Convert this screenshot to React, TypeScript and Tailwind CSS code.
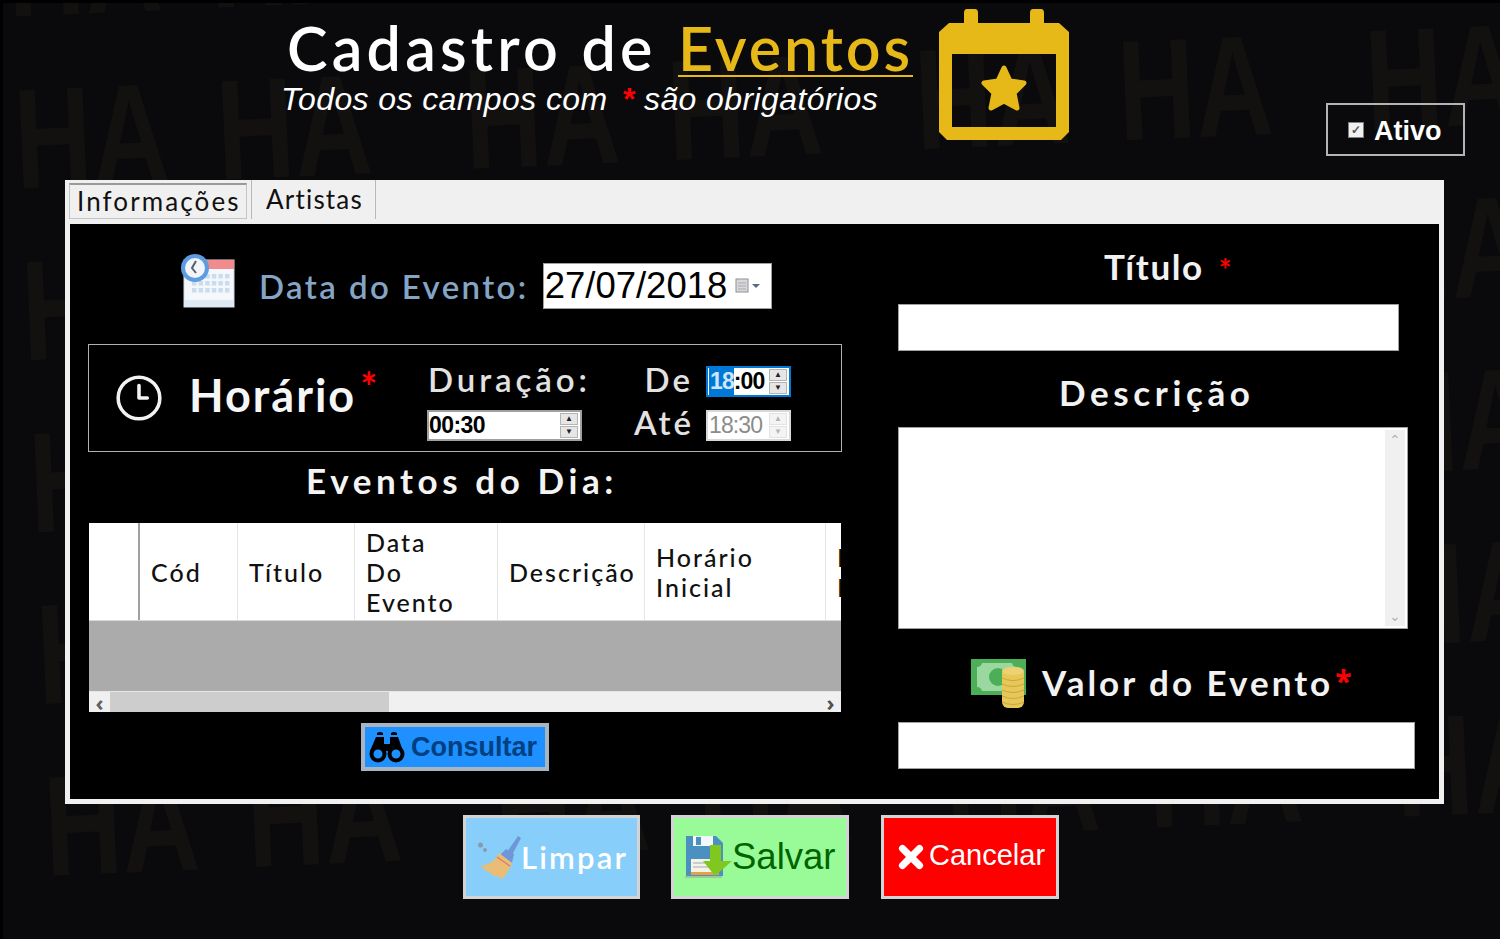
import { Clock3, X } from "lucide-react";

const font = "font-['Lato','Noto_Sans',sans-serif]";
const arial = "font-['Liberation_Sans',Arial,sans-serif]";

function Star() {
  return <span className="text-[#ff0000] font-bold">*</span>;
}

function Spinner({ disabled }: { disabled?: boolean }) {
  const color = disabled ? "text-[#b5b5b5]" : "text-[#222]";
  const bg = disabled ? "bg-[#f4f4f4] border-[#e2e2e2]" : "bg-[#e6e6e6] border-[#b4b4b4]";
  return (
    <div className="flex flex-col gap-px">
      <div className={`w-[18px] h-[12px] border flex items-center justify-center text-[8px] leading-none ${bg} ${color}`}>▲</div>
      <div className={`w-[18px] h-[12px] border flex items-center justify-center text-[8px] leading-none ${bg} ${color}`}>▼</div>
    </div>
  );
}

function TimeField({ value, disabled, focused }: { value: string; disabled?: boolean; focused?: boolean }) {
  const border = focused ? "border-[#0078d7]" : disabled ? "border-[#d8d8d8]" : "border-[#a0a0a0]";
  return (
    <div className={`w-[85px] h-[31px] bg-white border-2 flex items-center pl-[1px] pr-[2px] justify-between ${border} ${arial}`}>
      <span className={`text-[23px] leading-none tracking-[-0.9px] ${disabled ? "text-[#8c8c8c] font-normal" : "text-black font-bold"}`}>
        {focused ? (
          <>
            <span className="bg-[#0078d7] text-[#cfe6fa] inline-block py-[3px] pl-[1px]">18</span>:00
          </>
        ) : (
          value
        )}
      </span>
      <Spinner disabled={disabled} />
    </div>
  );
}

function CalendarStar() {
  return (
    <svg width="130" height="131" viewBox="0 0 130 131" className="shrink-0">
      <path
        fillRule="evenodd"
        fill="#e6b818"
        d="M28 0h8q3 0 3 4v10h52V4q0-4 3-4h8q3 0 3 4v10h15l10 9v100l-8 8H8l-8-8V23l10-9h15V4q0-4 3-4zM13 45v73h104V45z"
      />
      <path
        fill="#e6b818"
        stroke="#e6b818"
        strokeWidth="5"
        strokeLinejoin="round"
        d="M65 59l6 13 14 2-10 10 3 15-13-7-13 7 3-15-10-10 14-2z"
      />
    </svg>
  );
}

function CalendarClock() {
  return (
    <svg width="56" height="56" viewBox="0 0 56 56" className="shrink-0">
      <rect x="4" y="7" width="50" height="47" fill="#f4f7fb" stroke="#cfdbe8" />
      <rect x="4" y="7" width="50" height="9" fill="#f28b8b" />
      {[0, 1, 2, 3, 4, 5].map((c) =>
        [0, 1, 2].map((r) => <rect key={`${c}-${r}`} x={12 + c * 6.6} y={21 + r * 7} width="4.5" height="4.5" fill="#cbdcec" />),
      )}
      <rect x="4" y="47" width="50" height="7" fill="#dfe9f3" />
      <circle cx="15" cy="15" r="14" fill="#5d9ce0" />
      <circle cx="15" cy="15" r="10" fill="#f2f5f9" />
      <path d="M16 8l-4 7 4 5" fill="none" stroke="#54606c" strokeWidth="2" />
    </svg>
  );
}

function Binoculars() {
  return (
    <svg width="36" height="32" viewBox="0 0 36 32" className="shrink-0">
      <path d="M8 2q3-2 6 0v2H8zM22 2q3-2 6 0v2h-6z" fill="#000" />
      <path d="M7 6h8v7h6V6h8l5 14H1z" fill="#000" />
      <circle cx="9" cy="23" r="6.5" fill="#1e90ff" stroke="#000" strokeWidth="4" />
      <circle cx="27" cy="23" r="6.5" fill="#1e90ff" stroke="#000" strokeWidth="4" />
    </svg>
  );
}

function Broom() {
  return (
    <svg width="44" height="43" viewBox="0 0 44 43" className="shrink-0">
      <circle cx="2.5" cy="9" r="2.5" fill="#8a9aaa" />
      <circle cx="7" cy="14" r="2" fill="#8a9aaa" />
      <path d="M40 0l3 2-9 17-5-3z" fill="#6f97d8" />
      <path d="M28 13l8 5-2 9-12-8z" fill="#6f97d8" />
      <path d="M21 17l13 10q-3 9-10 16l-5-3-4 0-3-4-4-1-5-5q13-2 18-13z" fill="#e9bd76" />
      <path d="M19 21l13 9" stroke="#e2786a" strokeWidth="1.4" />
    </svg>
  );
}

function Floppy() {
  return (
    <svg width="48" height="42" viewBox="0 0 48 42" className="shrink-0">
      <path d="M1 0h30l7 7v33H1z" fill="#4a90c0" />
      <rect x="8" y="0" width="20" height="10" fill="#f4f7f8" />
      <rect x="11" y="1" width="5" height="8" fill="#4a90c0" />
      <rect x="6" y="23" width="28" height="16" fill="#f6f2e6" />
      <path d="M8 27h24M8 31h24" stroke="#9ab" strokeWidth="1" />
      <rect x="6" y="36" width="28" height="3" fill="#e8a040" />
      <path d="M0 41h37" stroke="#9a9aa0" strokeWidth="1" />
      <path d="M25 9h11v16h11L30 40 18 25h7z" fill="#80c820" />
    </svg>
  );
}

function Money() {
  return (
    <svg width="56" height="51" viewBox="0 0 56 51" className="shrink-0">
      <rect x="0" y="0" width="55" height="36" fill="#4caf58" />
      <path d="M6 8q4 0 5-4h30q1 4 5 4v20q-4 0-5 4H11q-1-4-5-4z" fill="#9bd89f" />
      <circle cx="27" cy="18" r="9" fill="#4caf58" />
      <rect x="31" y="8" width="22" height="41" rx="6" fill="#e6c757" />
      <ellipse cx="42" cy="12" rx="11" ry="4" fill="#ecd274" />
      {[19, 25, 31, 37, 43].map((y) => (
        <path key={y} d="M31 0q11 5 22 0" transform={`translate(0 ${y})`} fill="none" stroke="#c9a83c" strokeWidth="1" />
      ))}
    </svg>
  );
}

function DataGrid() {
  const heading = `text-[25px] leading-[30px] tracking-[2px] font-medium text-[#111] ${font}`;
  const cols = [
    { w: "w-[98px]", label: ["Cód"] },
    { w: "w-[117px]", label: ["Título"] },
    { w: "w-[143px]", label: ["Data", "Do", "Evento"] },
    { w: "w-[147px]", label: ["Descrição"] },
    { w: "w-[181px]", label: ["Horário", "Inicial"] },
  ];
  return (
    <div className="w-[752px] h-[189px] mt-[21px] ml-px bg-[#ababab] flex flex-col overflow-hidden">
      <div className="h-[98px] bg-white flex shrink-0 border-b border-[#d8d8d8]">
        <div className="w-[51px] border-r-2 border-[#a0a0a0] shrink-0" />
        {cols.map((c) => (
          <div key={c.w} className={`${c.w} shrink-0 border-r border-[#e6e6e6] flex flex-col justify-center pl-[11px] ${heading}`}>
            {c.label.map((l) => (
              <div key={l}>{l}</div>
            ))}
          </div>
        ))}
        <div className={`pl-[11px] flex flex-col justify-center shrink-0 ${heading}`}>
          <div>Horário</div>
          <div>Final</div>
        </div>
      </div>
      <div className="flex-1" />
      <div className="h-[21px] bg-[#f0f0f0] flex items-center border-t border-[#e6e6e6] shrink-0">
        <div className="w-[21px] text-center text-[22px] font-bold text-[#606060] leading-[18px]">‹</div>
        <div className="w-[279px] h-full bg-[#cdcdcd]" />
        <div className="flex-1" />
        <div className="w-[21px] text-center text-[22px] font-bold text-[#505050] leading-[18px]">›</div>
      </div>
    </div>
  );
}

function LeftColumn() {
  return (
    <div className="w-[754px] ml-[18px] pt-[29px] shrink-0">
      <div className="flex items-center h-[56px] pl-[92px]">
        <CalendarClock />
        <span className={`ml-[23px] mt-[11px] text-[33px] tracking-[2.4px] font-semibold text-[#84a5c6] whitespace-nowrap ${font}`}>Data do Evento:</span>
        <div className="ml-[14px] mt-[10px] w-[229px] h-[46px] bg-white border border-[#a0a0a0] flex items-center pl-[1px]">
          <span className={`text-[36.5px] leading-none text-black ${arial}`}>27/07/2018</span>
          <svg width="28" height="16" viewBox="0 0 28 16" className="ml-[8px]">
            <rect x="1" y="1" width="12" height="13" fill="#d8d8dc" stroke="#8f8f95" />
            <path d="M3 5h8M3 8h8M3 11h8" stroke="#a8a8ae" />
            <path d="M17 6h8l-4 4z" fill="#5a6b88" />
          </svg>
        </div>
      </div>

      <div className="mt-[35px] h-[108px] border border-[#b0b0b0] flex items-start">
        <Clock3 className="ml-[25px] mt-[28px] text-[#f2f2f2] shrink-0" size={50} strokeWidth={1.7} />
        <div className={`ml-[25px] mt-[22px] w-[239px] shrink-0 text-[45px] leading-[56px] font-bold tracking-[2px] text-[#f6f6f6] whitespace-nowrap ${font}`}>
          Horário
          <span className="text-[40px] relative -top-[10px] ml-[4px] leading-none">
            <Star />
          </span>
        </div>
        <div className="w-[164px] shrink-0 mt-[12px]">
          <div className={`text-[33px] leading-[44px] font-semibold tracking-[3.9px] text-[#e2e2e2] whitespace-nowrap ${font}`}>Duração:</div>
          <div className={`mt-[9px] -ml-px w-[155px] h-[31px] bg-white border-2 border-[#a0a0a0] flex items-center justify-between pr-[2px] ${arial}`}>
            <span className="text-[23px] leading-none font-bold tracking-[-0.6px] text-black">00:30</span>
            <Spinner />
          </div>
        </div>
        <div className={`ml-[38px] w-[64px] shrink-0 text-right text-[33px] font-semibold tracking-[3px] text-[#e2e2e2] ${font}`}>
          <div className="mt-[12px] leading-[44px] pr-[1px]">De</div>
          <div className="mt-[-1px] leading-[44px] -ml-[8px] whitespace-nowrap">Até</div>
        </div>
        <div className="ml-[12px] mt-[21px] shrink-0 flex flex-col gap-[13px]">
          <TimeField value="18:00" focused />
          <TimeField value="18:30" disabled />
        </div>
      </div>

      <div className={`mt-[6px] -ml-[6px] text-center text-[35px] leading-[44px] font-bold tracking-[4.6px] text-[#f4f4f4] ${font}`}>Eventos do Dia:</div>
      <DataGrid />

      <div className="mt-[11px] ml-[273px] w-[188px] h-[48px] border-[4px] border-[#a8b4c0] bg-[#1e90ff] flex items-center pl-[4px]">
        <Binoculars />
        <span className={`ml-[6px] text-[27px] leading-none font-bold text-[#003f80] ${arial}`}>Consultar</span>
      </div>
    </div>
  );
}

function RightColumn() {
  const label = `text-[35px] leading-[44px] font-bold text-[#f2f2f2] whitespace-nowrap ${font}`;
  return (
    <div className="ml-[56px] w-[520px] pt-[20px] shrink-0">
      <div className={`${label} pl-[206px] tracking-[1.6px]`}>
        Título
        <span className="text-[30px] relative top-[1px] ml-[15px] leading-none">
          <Star />
        </span>
      </div>
      <div className="mt-[16px] w-[501px] h-[47px] bg-white border border-[#a0a0a0]" />
      <div className={`${label} mt-[19px] pl-[161px] tracking-[4.6px]`}>Descrição</div>
      <div className="mt-[13px] w-[510px] h-[202px] bg-white border border-[#a0a0a0] flex justify-end p-[2px]">
        <div className="w-[20px] h-full bg-[#f0f0f0] flex flex-col justify-between items-center text-[#b4b4b4] text-[14px] leading-[20px]">
          <span>⌃</span>
          <span>⌄</span>
        </div>
      </div>
      <div className="mt-[29px] h-[52px] ml-[73px] flex items-center">
        <Money />
        <span className={`ml-[15px] -mt-[4px] text-[35px] font-bold tracking-[3px] text-[#f2f2f2] whitespace-nowrap ${font}`}>Valor do Evento</span>
        <span className="text-[30px] relative -top-[3px] ml-[2px] leading-none">
          <Star />
        </span>
      </div>
      <div className="mt-[12px] w-[517px] h-[47px] bg-white border border-[#a0a0a0]" />
    </div>
  );
}

// faint HA wallpaper behind everything
function Wallpaper() {
  const lines = ["a", "b", "c", "d", "e", "f"];
  const cells = ["1", "2", "3", "4", "5", "6", "7", "8"];
  return (
    <div className="absolute inset-0 overflow-hidden pointer-events-none">
      <div className="absolute left-[3px] -top-[118px] w-[2300px] origin-top-left -rotate-[2.5deg] scale-x-[0.75]">
        {lines.map((k) => (
          <div key={k} className="h-[172px] flex leading-[172px] text-[143px] font-bold text-[#121110] whitespace-nowrap font-['Liberation_Sans',sans-serif]">
            {cells.map((c) => (
              <span key={c} className="mr-[64px] even:mr-[124px]">
                HA
              </span>
            ))}
          </div>
        ))}
      </div>
      <div className="absolute inset-x-0 top-0 h-[3px] bg-black" />
      <div className="absolute inset-y-0 left-0 w-[3px] bg-black" />
    </div>
  );
}

export default function App() {
  return (
    <div className="relative w-[1500px] h-[939px] bg-[#0a0a0c] overflow-hidden">
      <Wallpaper />
      <div className="relative">
        <header className="h-[180px] flex items-start">
          <div className="ml-[283px] w-[656px] shrink-0">
            <h1 className={`mt-[11px] ml-[4px] text-[61px] leading-[74px] font-semibold tracking-[4.2px] text-white whitespace-nowrap ${font}`}>
              Cadastro de <span className="text-[#e6b818] border-b-2 border-[#e6b818] inline-block leading-[55px] tracking-[2.9px] ml-[2px]">Eventos</span>
            </h1>
            <p className={`-mt-[4px] -ml-[2px] text-[32px] leading-[36px] italic text-white whitespace-nowrap tracking-[0.4px] ${arial}`}>
              Todos os campos com <span className="text-[#ff0000] font-bold ml-[5px]">*</span> são obrigatórios
            </p>
          </div>
          <div className="mt-[9px]">
            <CalendarStar />
          </div>
          <div className={`ml-[257px] mt-[103px] w-[139px] h-[53px] border-2 border-[#b4b4b4] flex items-center pl-[20px] ${arial}`}>
            <span className="w-[16px] h-[16px] bg-[#f0f0f0] border border-[#808080] text-[#555] flex items-center justify-center text-[12px] font-bold leading-none">✓</span>
            <span className="ml-[10px] mt-[3px] text-[27px] font-bold text-white">Ativo</span>
          </div>
        </header>

        <main className="ml-[65px] w-[1379px] h-[624px] bg-[#f0f0f0] flex flex-col">
          <div className={`h-[44px] flex items-stretch shrink-0 text-[26px] text-[#111] ${font}`}>
            <div className="mt-[3px] ml-[4px] w-[178px] h-[36px] border border-[#c4c4c4] border-t-2 border-t-[#9a9a9a] flex items-center pl-[7px] whitespace-nowrap tracking-[2.1px]">Informações</div>
            <div className="ml-[4px] w-[125px] h-[39px] border-l border-r border-[#b8b8b8] flex items-center pl-[14px] tracking-[1.2px]">Artistas</div>
          </div>
          <div className="mx-[5px] mb-[5px] flex-1 bg-black flex">
            <LeftColumn />
            <RightColumn />
          </div>
        </main>

        <footer className="mt-[11px] ml-[463px] flex">
          <div className="w-[177px] h-[84px] border-[3px] border-[#d3d3d3] bg-[#87cefa] flex items-center pl-[12px]">
            <Broom />
            <span className={`-ml-[1px] text-[31px] tracking-[2.2px] font-semibold text-white leading-none ${font}`}>Limpar</span>
          </div>
          <div className="ml-[31px] w-[178px] h-[84px] border-[3px] border-[#d3d3d3] bg-[#98fb98] flex items-center pl-[11px]">
            <Floppy />
            <span className={`-ml-[1px] text-[36.5px] text-[#006400] leading-none ${arial}`}>Salvar</span>
          </div>
          <div className="ml-[32px] w-[178px] h-[84px] border-[3px] border-[#d3d3d3] bg-[#ff0000] flex items-center pl-[10px]">
            <X className="text-white shrink-0" size={34} strokeWidth={5} />
            <span className={`ml-[1px] -mt-[4px] text-[29px] text-white leading-none ${arial}`}>Cancelar</span>
          </div>
        </footer>
      </div>
    </div>
  );
}
